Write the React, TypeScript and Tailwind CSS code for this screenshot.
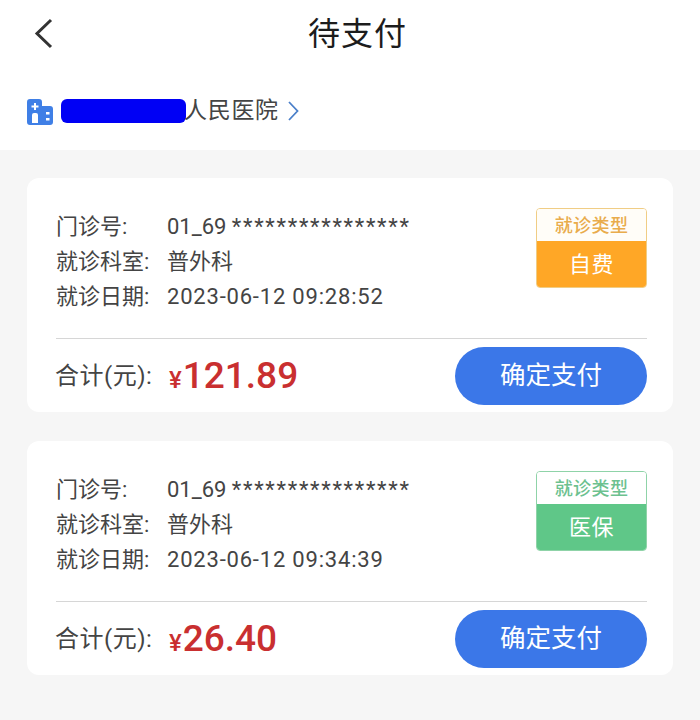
import React from 'react';

const FONT = "font-['Roboto','Noto_Sans_CJK_SC',sans-serif]";

interface OrderProps {
  date: string;
  amount: string;
  kind: string;
  labelColor: string;
  borderColor: string;
  fillColor: string;
}

const Order: React.FC<OrderProps> = ({ date, amount, kind, labelColor, borderColor, fillColor }) => (
  <div className="h-[234px] bg-white rounded-xl pl-[29px] pr-[26px] flex flex-col">
    <div className="h-[161px] flex justify-between border-b border-[#d6d6d6]">
      <div className="pt-[31px] text-[22px] leading-[35px] text-[#444444]">
        <div className="flex">
          <span className="w-[111px]">门诊号:</span>
          <span>
            01_69 <span className="tracking-[1.7px]">****************</span>
          </span>
        </div>
        <div className="flex">
          <span className="w-[111px]">就诊科室:</span>
          <span>普外科</span>
        </div>
        <div className="flex">
          <span className="w-[111px]">就诊日期:</span>
          <span className="tracking-[0.8px]">2023-06-12 {date}</span>
        </div>
      </div>
      <div className={`mt-[30px] w-[111px] h-[80px] rounded border overflow-hidden flex flex-col ${borderColor}`}>
        <div className={`h-[32px] flex items-center justify-center text-[18px] tracking-[0.4px] font-medium ${labelColor}`}>就诊类型</div>
        <div className={`flex-1 flex items-center justify-center text-[22px] tracking-[0.5px] text-white ${fillColor}`}>{kind}</div>
      </div>
    </div>
    <div className="flex-1 flex items-center justify-between">
      <div className="flex items-center">
        <span className="w-[114px] -ml-[1px] text-[24px] tracking-[0.5px] text-[#444444]">合计(元):</span>
        <span className="flex items-baseline font-medium text-[#c92f30] text-[37px]">
          <span className="text-[24px] mr-[1px]">¥</span>
          {amount}
        </span>
      </div>
      <button className="w-[192px] h-[58px] rounded-full bg-[#3b77e8] text-white text-[25.5px] flex items-center justify-center">
        确定支付
      </button>
    </div>
  </div>
);

const App: React.FC = () => (
  <div className={`w-[700px] h-[720px] bg-[#f6f6f6] overflow-hidden ${FONT}`}>
    <div className="bg-white h-[150px]">
      <div className="h-[68px] relative flex items-center justify-center pl-[15px]">
        <svg className="absolute left-[34px] top-[18px] w-[19px] h-[31px]" viewBox="0 0 19 31" fill="none" stroke="#333333" strokeWidth="3">
          <path d="M17 2 3 15.500 17 29" />
        </svg>
        <span className="text-[32px] tracking-[1px] text-[#1c1c1c]">待支付</span>
      </div>
      <div className="mt-[27px] pl-[27px] flex items-center h-[32px]">
        <svg className="w-[26px] h-[26px] mt-[2px]" viewBox="0 0 26 26">
          <path d="M3 0h9a3 3 0 0 1 3 3v4h8a3 3 0 0 1 3 3v13a3 3 0 0 1-3 3H3a3 3 0 0 1-3-3V3a3 3 0 0 1 3-3z" fill="#3f7fe6" />
          <path d="M7 4h2v2.500h2.500v2H9V11H7V8.500H4.500v-2H7z" fill="#ffffff" />
          <path d="M7 14h2a2 2 0 0 1 2 2v8H5v-8a2 2 0 0 1 2-2z" fill="#ffffff" />
          <rect x="19" y="13" width="3.500" height="2.500" fill="#ffffff" />
          <rect x="19" y="19" width="3.500" height="2.500" fill="#ffffff" />
        </svg>
        <span className="ml-[8px] w-[125px] h-[24px] rounded-md bg-[#0000f5]" />
        <span className="-ml-[2px] text-[23px] tracking-[0.7px] text-[#444444]">人民医院</span>
        <svg className="ml-[9px] w-[11px] h-[20px]" viewBox="0 0 11 20" fill="none" stroke="#4a7fc9" strokeWidth="1.800">
          <path d="M1 1l8.500 9L1 19" />
        </svg>
      </div>
    </div>
    <div className="px-[27px] pt-[28px] flex flex-col gap-[29px]">
      <Order
        date="09:28:52"
        amount="121.89"
        kind="自费"
        labelColor="text-[#e9ac4c] bg-[#fffdf8]"
        borderColor="border-[#f0cd85]"
        fillColor="bg-[#ffa726]"
      />
      <Order
        date="09:34:39"
        amount="26.40"
        kind="医保"
        labelColor="text-[#6cc18f] bg-white"
        borderColor="border-[#8fd3a8]"
        fillColor="bg-[#5fc788]"
      />
    </div>
  </div>
);

export default App;
